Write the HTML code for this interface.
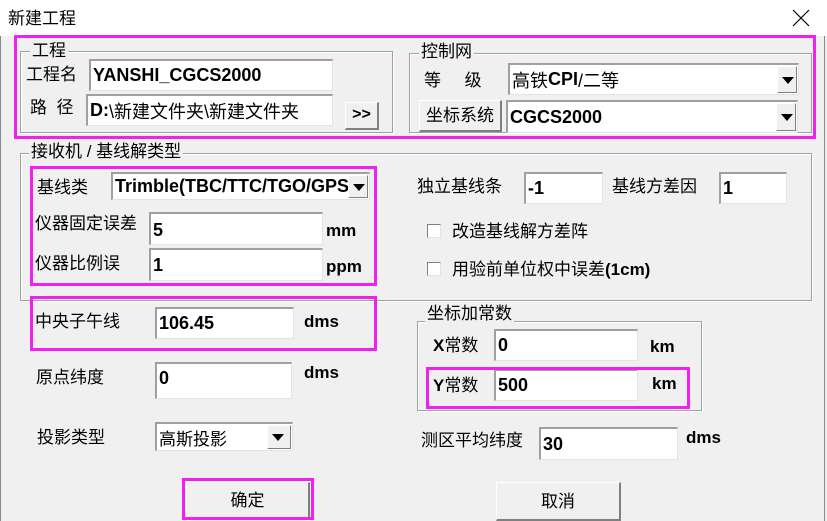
<!DOCTYPE html>
<html><head><meta charset="utf-8"><style>
*{margin:0;padding:0;box-sizing:border-box}
body{width:827px;height:521px;background:#f0f0f0;position:relative;overflow:hidden;font-family:"Liberation Sans","Noto Sans CJK SC",sans-serif;font-size:17px;color:#000}
.a{position:absolute}
.t{position:absolute;white-space:nowrap;line-height:20px}
.in{position:absolute;background:#fff;border-top:2px solid #a0a0a0;border-left:2px solid #a0a0a0;border-right:1px solid #e3e3e3;border-bottom:1px solid #e3e3e3;font-weight:bold;font-size:18px;padding:0 2px;display:flex;align-items:center;white-space:nowrap;overflow:hidden}
.btn{position:absolute;background:#f0f0f0;border-top:1px solid #fff;border-left:1px solid #fff;border-right:2px solid #808080;border-bottom:2px solid #808080;text-align:center}
.mg{position:absolute;border:3px solid #f020f0}
.gb{position:absolute;border:1px solid #a0a0a0;box-shadow:inset 1px 1px 0 #fff,1px 1px 0 #fff}
.gl{position:absolute;background:#f0f0f0;padding:0 2px;line-height:20px}
.dd{position:absolute;top:1px;right:1px;bottom:1px;width:20px;background:#f0f0f0;border-top:1px solid #fff;border-left:1px solid #fff;border-right:1px solid #808080;border-bottom:1px solid #808080}
.dd:after{content:"";position:absolute;left:4px;top:50%;margin-top:-3px;border-left:6px solid transparent;border-right:6px solid transparent;border-top:7px solid #000}
.cb{position:absolute;width:14px;height:14px;background:#fff;border-top:1px solid #808080;border-left:1px solid #808080;border-right:1px solid #e3e3e3;border-bottom:1px solid #e3e3e3}
</style></head><body>
<div class="a" style="left:0;top:0;width:827px;height:36px;background:#fff"></div>
<div class="t" style="left:8px;top:9px;font-size:17px">新建工程</div>
<svg class="a" style="left:792px;top:9px" width="18" height="18"><path d="M1 1L17 17M17 1L1 17" stroke="#000" stroke-width="1.2"/></svg>
<div class="a" style="left:0;top:36px;width:1px;height:485px;background:#888"></div>
<div class="a" style="right:2px;top:36px;width:1px;height:485px;background:#888"></div>

<!-- 工程 -->
<div class="gb" style="left:20px;top:51px;width:373px;height:82px"></div>
<div class="gl" style="left:30px;top:41px">工程</div>
<div class="t" style="left:26px;top:65px">工程名</div>
<div class="in" style="left:89px;top:59px;width:244px;height:32px">YANSHI_CGCS2000</div>
<div class="t" style="left:30px;top:98px">路&nbsp;&nbsp;径</div>
<div class="in" style="left:86px;top:94px;width:247px;height:32px;font-weight:normal"><b>D:</b>\新建文件夹\新建文件夹</div>
<div class="btn" style="left:345px;top:102px;width:34px;height:28px;font-weight:bold;font-size:16px;line-height:24px">&gt;&gt;</div>

<!-- 控制网 -->
<div class="gb" style="left:409px;top:53px;width:403px;height:80px"></div>
<div class="gl" style="left:419px;top:42px">控制网</div>
<div class="t" style="left:424px;top:71px">等&nbsp;&nbsp;&nbsp;&nbsp;&nbsp;级</div>
<div class="in" style="left:508px;top:63px;width:291px;height:32px;font-weight:normal">高铁<b>CPI</b>/二等<div class="dd"></div></div>
<div class="btn" style="left:419px;top:100px;width:83px;height:32px;line-height:29px">坐标系统</div>
<div class="in" style="left:506px;top:100px;width:292px;height:33px">CGCS2000<div class="dd"></div></div>
<div class="mg" style="left:14px;top:35px;width:802px;height:104px"></div>

<!-- 接收机 -->
<div class="gb" style="left:20px;top:153px;width:792px;height:148px"></div>
<div class="gl" style="left:29px;top:142px">接收机 / 基线解类型</div>
<div class="t" style="left:37px;top:178px">基线类</div>
<div class="in" style="left:111px;top:172px;width:259px;height:28px">Trimble(TBC/TTC/TGO/GPS<div class="dd"></div></div>
<div class="t" style="left:35px;top:214px">仪器固定误差</div>
<div class="in" style="left:149px;top:212px;width:174px;height:33px;align-items:flex-end;padding-bottom:3px">5</div>
<div class="t" style="left:326px;top:221px;font-weight:bold">mm</div>
<div class="t" style="left:35px;top:254px">仪器比例误</div>
<div class="in" style="left:149px;top:248px;width:174px;height:33px">1</div>
<div class="t" style="left:326px;top:257px;font-weight:bold">ppm</div>
<div class="mg" style="left:30px;top:166px;width:347px;height:120px"></div>

<div class="t" style="left:417px;top:177px">独立基线条</div>
<div class="in" style="left:524px;top:172px;width:79px;height:32px">-1</div>
<div class="t" style="left:612px;top:177px">基线方差因</div>
<div class="in" style="left:719px;top:172px;width:68px;height:32px">1</div>
<div class="cb" style="left:427px;top:224px"></div>
<div class="t" style="left:452px;top:222px">改造基线解方差阵</div>
<div class="cb" style="left:427px;top:262px"></div>
<div class="t" style="left:452px;top:260px">用验前单位权中误差<b>(1cm)</b></div>

<!-- lower left -->
<div class="t" style="left:35px;top:312px">中央子午线</div>
<div class="in" style="left:155px;top:307px;width:139px;height:32px">106.45</div>
<div class="t" style="left:304px;top:312px;font-weight:bold">dms</div>
<div class="mg" style="left:30px;top:296px;width:347px;height:55px"></div>

<div class="t" style="left:36px;top:368px">原点纬度</div>
<div class="in" style="left:155px;top:362px;width:137px;height:37px;align-items:flex-start;padding-top:4px">0</div>
<div class="t" style="left:304px;top:363px;font-weight:bold">dms</div>

<div class="t" style="left:37px;top:428px">投影类型</div>
<div class="in" style="left:155px;top:422px;width:138px;height:29px;font-weight:normal;font-size:17px">高斯投影<div class="dd" style="width:24px"></div></div>

<!-- 坐标加常数 -->
<div class="gb" style="left:417px;top:321px;width:285px;height:90px"></div>
<div class="gl" style="left:425px;top:304px">坐标加常数</div>
<div class="t" style="left:433px;top:336px"><b>X</b>常数</div>
<div class="in" style="left:494px;top:329px;width:144px;height:32px">0</div>
<div class="t" style="left:650px;top:337px;font-weight:bold">km</div>
<div class="t" style="left:433px;top:376px"><b>Y</b>常数</div>
<div class="in" style="left:494px;top:369px;width:144px;height:32px">500</div>
<div class="t" style="left:652px;top:374px;font-weight:bold">km</div>
<div class="mg" style="left:426px;top:367px;width:264px;height:42px"></div>

<div class="t" style="left:421px;top:431px">测区平均纬度</div>
<div class="in" style="left:539px;top:427px;width:139px;height:33px">30</div>
<div class="t" style="left:686px;top:428px;font-weight:bold">dms</div>

<div class="btn" style="left:186px;top:482px;width:124px;height:37px;line-height:36px">确定</div>
<div class="mg" style="left:182px;top:478px;width:132px;height:42px"></div>
<div class="btn" style="left:496px;top:482px;width:125px;height:39px;line-height:38px">取消</div>
</body></html>
